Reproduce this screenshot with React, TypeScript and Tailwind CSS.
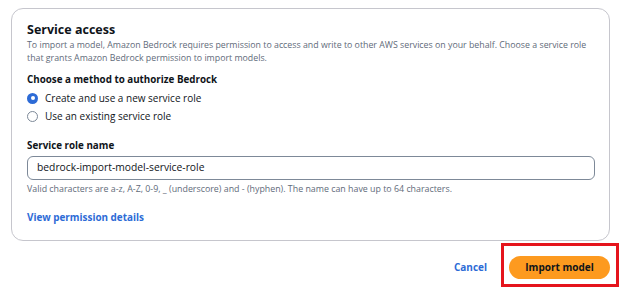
export default function App() {
  return (
    <div className="w-[624px] h-[288px] bg-white overflow-hidden font-['Open_Sans',_'Noto_Sans',_sans-serif] text-[#0f141a]">
      <div className="ml-[11px] mt-[8px] w-[599px] h-[233px] border border-[#c6c6cd] rounded-[12px] pl-[15px] pr-[15px] pt-[12px]">
        <div className="text-[12.5px] font-bold leading-[18px]">Service access</div>
        <div className="text-[8.8px] leading-[13px] text-[#5f6b7a]">
          To import a model, Amazon Bedrock requires permission to access and write to other AWS services on your behalf. Choose a service role that grants Amazon Bedrock permission to import models.
        </div>
        <div className="text-[9.8px] font-bold leading-[14px] mt-[8px]">Choose a method to authorize Bedrock</div>
        <div className="mt-[3px] flex flex-col gap-[2px]">
          <div className="flex items-center h-[16px] gap-[7px]">
            <span className="w-[11px] h-[11px] rounded-full bg-[#2d6bd6] flex items-center justify-center">
              <span className="w-[4px] h-[4px] rounded-full bg-white" />
            </span>
            <span className="text-[10px] leading-[16px]">Create and use a new service role</span>
          </div>
          <div className="flex items-center h-[16px] gap-[7px]">
            <span className="w-[11px] h-[11px] rounded-full border border-[#7d8998]" />
            <span className="text-[10px] leading-[16px]">Use an existing service role</span>
          </div>
        </div>
        <div className="text-[9.8px] font-bold leading-[14px] mt-[15px]">Service role name</div>
        <div className="mt-[3px] w-[568px] h-[24px] border border-[#7d8998] rounded-[6px] flex items-center pl-[9px] text-[10.3px]">
          bedrock-import-model-service-role
        </div>
        <div className="text-[8.85px] leading-[12px] text-[#5f6b7a] mt-[3px]">
          Valid characters are a-z, A-Z, 0-9, _ (underscore) and - (hyphen). The name can have up to 64 characters.
        </div>
        <div className="text-[9.9px] font-bold leading-[14px] text-[#2d6bd6] mt-[15px]">View permission details</div>
      </div>
      <div className="flex justify-end items-start mt-[2px] pr-[5px]">
        <span className="text-[10px] font-bold leading-[14px] text-[#2d6bd6] mt-[17px] mr-[14px]">Cancel</span>
        <div className="border-[3px] border-[#e5141c] w-[118px] h-[44px] pt-[10px] pl-[5px]">
          <div className="w-[101px] h-[23px] rounded-full bg-[#fd9a1f] flex items-center justify-center text-[10px] font-bold text-[#0f141a]">
            Import model
          </div>
        </div>
      </div>
    </div>
  );
}
